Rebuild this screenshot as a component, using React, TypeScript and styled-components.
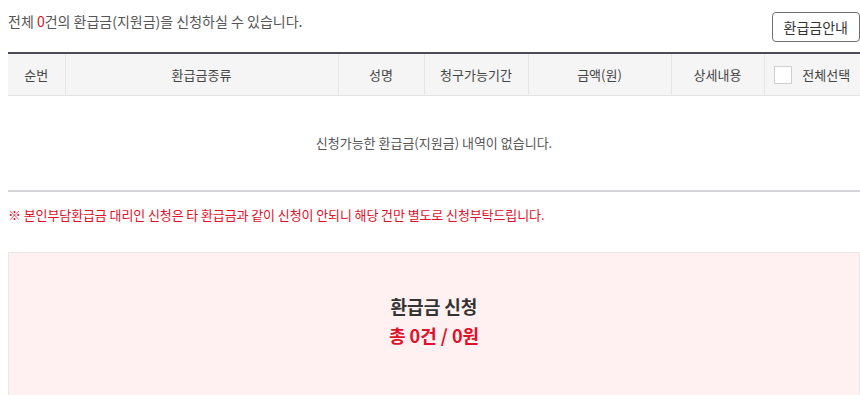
import styled, { createGlobalStyle } from 'styled-components';

const GlobalStyle = createGlobalStyle`
  body {
    margin: 0;
    background: #ffffff;
    font-family: "Noto Sans CJK KR", "Noto Sans", sans-serif;
    color: #444;
  }
`;

const Page = styled.div`
  padding: 0 0 0 8px;
  width: 852px;
`;

const TopBar = styled.div`
  display: flex;
  justify-content: space-between;
  align-items: flex-start;
  padding-top: 11px;
  height: 52px;
  box-sizing: border-box;
`;

const Summary = styled.p`
  margin: 0;
  font-size: 14px;
  line-height: 20px;
  color: #555;
`;

const Count = styled.span`
  color: #e0102a;
`;

const GuideButton = styled.button`
  height: 30px;
  margin-top: 1px;
  padding: 0 11px;
  border: 1px solid #707070;
  border-radius: 4px;
  background: #fff;
  font-family: inherit;
  font-size: 14px;
  color: #333;
`;

const Table = styled.table`
  width: 852px;
  border-collapse: collapse;
  border-top: 2px solid #4b4b58;
  table-layout: fixed;
`;

const Th = styled.th`
  height: 41px;
  padding: 0;
  background: #f5f5f5;
  border-bottom: 1px solid #e3e3e3;
  border-left: 1px solid #e6e6e6;
  font-size: 13px;
  font-weight: 400;
  color: #444;
  &:first-child {
    border-left: none;
  }
`;

const SelectAll = styled.label`
  display: flex;
  align-items: center;
  justify-content: center;
  gap: 10px;
`;

const Box = styled.span`
  width: 16px;
  height: 16px;
  border: 1px solid #cfcfcf;
  background: #fff;
`;

const EmptyCell = styled.td`
  height: 92px;
  text-align: center;
  font-size: 13px;
  color: #555;
  border-bottom: 2px solid #d6d6da;
  padding: 0 0 2px;
`;

const Notice = styled.p`
  margin: 14px 0 0;
  height: 46px;
  font-size: 13px;
  line-height: 18px;
  color: #e0102a;
  letter-spacing: -0.1px;
`;

const ApplyPanel = styled.section`
  border: 1px solid #ebe6e8;
  background: #fff1f1;
  height: 150px;
  padding-top: 39px;
  box-sizing: border-box;
  text-align: center;
`;

const PanelTitle = styled.h2`
  margin: 0;
  font-size: 18px;
  line-height: 28px;
  font-weight: 700;
  color: #333;
`;

const PanelTotal = styled.div`
  font-size: 18px;
  line-height: 30px;
  font-weight: 700;
  color: #e0102a;
`;

const columns: [string, number][] = [
  ['순번', 57],
  ['환급금종류', 273],
  ['성명', 86],
  ['청구가능기간', 104],
  ['금액(원)', 143],
  ['상세내용', 93],
];

export default function App() {
  return (
    <>
      <GlobalStyle />
      <Page>
        <TopBar>
          <Summary>
            전체 <Count>0</Count>건의 환급금(지원금)을 신청하실 수 있습니다.
          </Summary>
          <GuideButton>환급금안내</GuideButton>
        </TopBar>
        <Table>
          <colgroup>
            {columns.map(([label, w]) => (
              <col key={label} style={{ width: w }} />
            ))}
            <col style={{ width: 96 }} />
          </colgroup>
          <thead>
            <tr>
              {columns.map(([label]) => (
                <Th key={label}>{label}</Th>
              ))}
              <Th>
                <SelectAll>
                  <Box />
                  전체선택
                </SelectAll>
              </Th>
            </tr>
          </thead>
          <tbody>
            <tr>
              <EmptyCell colSpan={7}>신청가능한 환급금(지원금) 내역이 없습니다.</EmptyCell>
            </tr>
          </tbody>
        </Table>
        <Notice>※ 본인부담환급금 대리인 신청은 타 환급금과 같이 신청이 안되니 해당 건만 별도로 신청부탁드립니다.</Notice>
        <ApplyPanel>
          <PanelTitle>환급금 신청</PanelTitle>
          <PanelTotal>총 0건 / 0원</PanelTotal>
        </ApplyPanel>
      </Page>
    </>
  );
}
